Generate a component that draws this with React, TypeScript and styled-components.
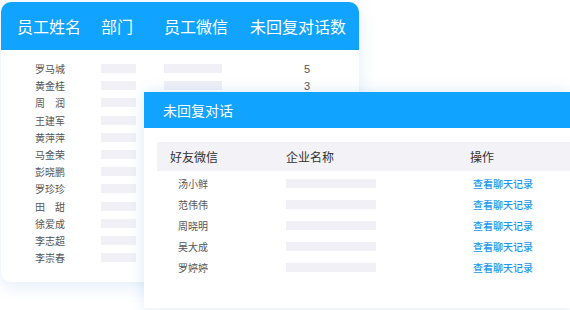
import React from 'react';
import styled, { createGlobalStyle } from 'styled-components';

const GlobalStyle = createGlobalStyle`
  body {
    margin: 0;
    background: #ffffff;
    font-family: "Noto Sans CJK SC", "Noto Sans", sans-serif;
  }
`;

const BLUE = '#10a3ff';

const Stage = styled.div`
  position: relative;
  width: 570px;
  height: 310px;
  overflow: hidden;
  padding: 2px 0 0 1px;
  box-sizing: border-box;
`;

const BackCard = styled.div`
  width: 358px;
  height: 280px;
  border-radius: 10px;
  background: #ffffff;
  box-shadow: 0 4px 18px rgba(40, 130, 210, 0.14);
  overflow: hidden;
`;

const BackGrid = styled.div`
  display: grid;
  grid-template-columns: 100px 63px 86px 1fr;
  align-items: center;
`;

const BackHead = styled(BackGrid)`
  height: 48px;
  background: ${BLUE};
  color: #ffffff;
  font-size: 16px;
`;

const HeadCell = styled.div<{ $pad?: number }>`
  padding-left: ${({ $pad }) => $pad ?? 0}px;
  white-space: nowrap;
`;

const BackBody = styled.div`
  padding-top: 10px;
`;

const BackRow = styled(BackGrid)`
  height: 17.2px;
`;

const NameCell = styled.div<{ $pad: number }>`
  padding-left: ${({ $pad }) => $pad}px;
  font-size: 10px;
  color: #555;
  white-space: nowrap;
`;

const Bar = styled.div<{ $w: number }>`
  width: ${({ $w }) => $w}px;
  height: 9px;
  background: #f0f0f6;
`;

const Count = styled.div`
  padding-left: 54px;
  font-size: 11px;
  color: #555;
  font-family: "Liberation Sans", "Noto Sans CJK SC", sans-serif;
`;

const Dialog = styled.div`
  position: absolute;
  left: 144px;
  top: 92px;
  width: 426px;
  height: 216px;
  background: #ffffff;
  box-shadow: 0 0 14px rgba(40, 130, 210, 0.16);
`;

const DialogHeader = styled.div`
  height: 36px;
  display: flex;
  align-items: center;
  padding-left: 19px;
  background: ${BLUE};
  color: #ffffff;
  font-size: 14px;
`;

const Table = styled.div`
  margin: 14px 0 0 13px;
`;

const DialogGrid = styled.div`
  display: grid;
  grid-template-columns: 116px 184px 1fr;
  align-items: center;
  padding-left: 13px;
`;

const TableHead = styled(DialogGrid)`
  height: 29px;
  background: #f2f2f7;
  font-size: 12px;
  color: #333;
`;

const TableBody = styled.div`
  padding-top: 2px;
`;

const TableRow = styled(DialogGrid)`
  height: 21px;
`;

const Link = styled.a`
  padding-left: 3px;
  font-size: 10px;
  font-weight: 500;
  color: #1898ee;
  text-decoration: none;
  cursor: pointer;
  white-space: nowrap;
`;

const staff = [
  { name: '罗马城', count: '5', wx: true },
  { name: '黄金桂', count: '3', wx: true },
  { name: '周\u3000润' },
  { name: '王建军' },
  { name: '黄萍萍' },
  { name: '马金荣' },
  { name: '彭晓鹏' },
  { name: '罗珍珍' },
  { name: '田\u3000甜' },
  { name: '徐爱成' },
  { name: '李志超' },
  { name: '李崇春' },
];

const friends = ['汤小鲜', '范伟伟', '周晓明', '吴大成', '罗婷婷'];

export default function App() {
  return (
    <>
      <GlobalStyle />
      <Stage>
        <BackCard>
          <BackHead>
            <HeadCell $pad={16}>员工姓名</HeadCell>
            <HeadCell>部门</HeadCell>
            <HeadCell>员工微信</HeadCell>
            <HeadCell>未回复对话数</HeadCell>
          </BackHead>
          <BackBody>
            {staff.map((s) => (
              <BackRow key={s.name}>
                <NameCell $pad={34}>{s.name}</NameCell>
                <Bar $w={35} />
                {s.wx ? <Bar $w={58} /> : <div />}
                <Count>{s.count}</Count>
              </BackRow>
            ))}
          </BackBody>
        </BackCard>

        <Dialog>
          <DialogHeader>未回复对话</DialogHeader>
          <Table>
            <TableHead>
              <div>好友微信</div>
              <div>企业名称</div>
              <div>操作</div>
            </TableHead>
            <TableBody>
              {friends.map((f) => (
                <TableRow key={f}>
                  <NameCell $pad={8}>{f}</NameCell>
                  <Bar $w={90} />
                  <Link>查看聊天记录</Link>
                </TableRow>
              ))}
            </TableBody>
          </Table>
        </Dialog>
      </Stage>
    </>
  );
}
